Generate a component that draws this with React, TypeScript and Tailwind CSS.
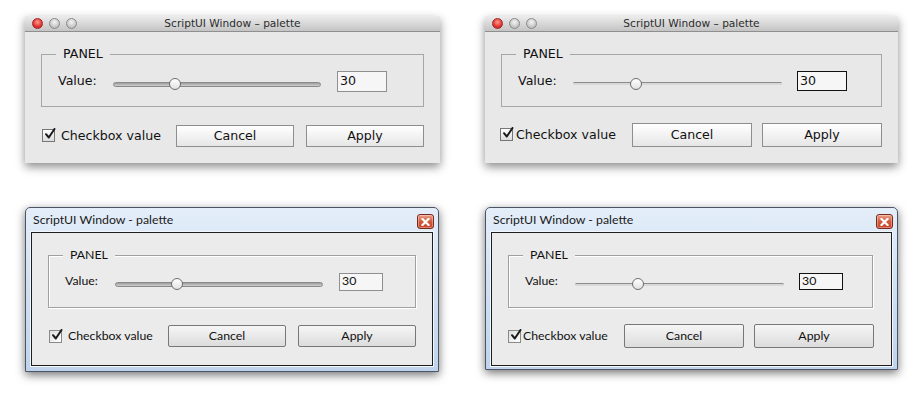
import React from "react";

type Cfg = {
  panelW: number;
  labelW: number;
  sliderW: number;
  editMl: number;
  editW: number;
  editH: number;
  focused: boolean;
  thick: boolean;
  cbMl: number;
  cbW: number;
  cbGap: number;
  btnW: number;
  btnH: number;
  btnGap: number;
  rowMt: number;
};

const macFont = { fontFamily: '"DejaVu Sans", "Noto Sans", sans-serif' };
const winFont = { fontFamily: 'Lato, "Noto Sans", sans-serif' };

const Slider = ({ width, thick, value }: { width: number; thick: boolean; value: number }) => (
  <div className="relative mt-[5px] flex h-[14px] items-center" style={{ width }}>
    {thick ? (
      <div className="h-[5px] w-full rounded-full border border-[#8a8a8a] bg-gradient-to-b from-[#9c9c9c] to-[#d0d0d0]" />
    ) : (
      <div className="h-[3px] w-full rounded-full border-t border-[#8c8c8c] bg-[#d8d8d8]" />
    )}
    <div
      className="absolute top-[1px] h-[12px] w-[12px] -translate-x-1/2 rounded-full border border-[#6e6e6e] bg-gradient-to-b from-white to-[#e2e2e2]"
      style={{ left: `${value}%` }}
    />
  </div>
);

const CheckMark = ({ size }: { size: number }) => (
  <svg width={size} height={size} viewBox="0 0 12 12" className="absolute left-[1px] top-[-2px]">
    <path d="M2 6.2 L4.8 9.5 L10.5 1" fill="none" stroke="#1a1a1a" strokeWidth="2" strokeLinecap="round" strokeLinejoin="round" />
  </svg>
);

const Body = ({ c, mac }: { c: Cfg; mac: boolean }) => {
  const txt = mac ? "text-[12.6px]" : "text-[12.3px]";
  return (
    <>
      <div
        className={`relative h-[53px] border ${mac ? "border-[#a6a6a6]" : "border-[#a0a0a0] shadow-[inset_1px_1px_0_#ffffff,1px_1px_0_#ffffff]"} ml-[16px] mt-[22px]`}
        style={{ width: c.panelW }}
      >
        <span
          className={`absolute left-[14px] top-[-10px] px-[7px] leading-[18px] ${mac ? "bg-[#e8e8e8]" : "bg-[#ebebeb]"} ${txt} text-[#111]`}
        >
          PANEL
        </span>
        <div className="flex items-center pl-[16px] pt-[16px]">
          <span className={`${txt} text-[#111]`} style={{ width: c.labelW }}>
            Value:
          </span>
          <Slider width={c.sliderW} thick={c.thick} value={30} />
          <div
            className={`flex items-center pl-[2px] ${txt} text-[#111] ${
              c.focused ? "border-[1.5px] border-[#111] bg-[#f6f6f6]" : "border border-[#8f8f8f] bg-[#f6f6f6]"
            }`}
            style={{ marginLeft: c.editMl, width: c.editW, height: c.editH }}
          >
            30
          </div>
        </div>
      </div>
      <div className="flex items-center" style={{ marginTop: c.rowMt, marginLeft: c.cbMl }}>
        <div className="flex items-center" style={{ width: c.cbW }}>
          <div
            className={`relative h-[13px] w-[13px] shrink-0 border ${
              mac ? "border-[#777] bg-gradient-to-b from-white to-[#dcdcdc]" : "border-[#8a8a8a] bg-gradient-to-br from-[#dedede] to-white"
            }`}
          >
            <CheckMark size={12} />
          </div>
          <span className={`${txt} text-[#111]`} style={{ marginLeft: c.cbGap }}>
            Checkbox value
          </span>
        </div>
        {["Cancel", "Apply"].map((t, i) => (
          <div
            key={t}
            className={`flex items-center justify-center border ${
              mac
                ? "border-[#8e8e8e] bg-gradient-to-b from-white to-[#e6e6e6]"
                : "rounded-[2px] border-[#777] bg-gradient-to-b from-[#f6f6f6] to-[#dcdcdc]"
            } ${txt} text-[#111]`}
            style={{ width: c.btnW, height: c.btnH, marginLeft: i ? c.btnGap : 0 }}
          >
            {t}
          </div>
        ))}
      </div>
    </>
  );
};

const MacWindow = ({ w, h, c }: { w: number; h: number; c: Cfg }) => (
  <div className="shrink-0 bg-[#e8e8e8] shadow-[0_4px_9px_rgba(0,0,0,0.45)]" style={{ width: w, height: h, ...macFont }}>
    <div className="relative flex h-[16px] items-center justify-center border-b border-[#8f8f8f] bg-gradient-to-b from-[#ececec] to-[#c4c4c4]">
      <div className="absolute left-[7px] top-[2px] flex gap-[6px]">
        <div className="h-[11px] w-[11px] rounded-full border border-[#a0262a] bg-[radial-gradient(circle_at_50%_35%,#ff9a8e,#e0352e_60%,#b81f1f)]" />
        <div className="h-[11px] w-[11px] rounded-full border border-[#8a8a8a] bg-[radial-gradient(circle_at_50%_35%,#f4f4f4,#c2c2c2_70%,#a8a8a8)]" />
        <div className="h-[11px] w-[11px] rounded-full border border-[#8a8a8a] bg-[radial-gradient(circle_at_50%_35%,#f4f4f4,#c2c2c2_70%,#a8a8a8)]" />
      </div>
      <span className="text-[10.6px] leading-none text-[#2c2c2c]">ScriptUI Window – palette</span>
    </div>
    <Body c={c} mac />
  </div>
);

const WinWindow = ({ w, h, clientH, c }: { w: number; h: number; clientH: number; c: Cfg }) => (
  <div
    className="shrink-0 rounded-t-[5px] border border-[#4a5566] bg-gradient-to-b from-[#e4eef9] via-[#cfe0f3] to-[#bfd4ec] px-[5px] shadow-[0_3px_10px_rgba(0,0,0,0.55)]"
    style={{ width: w, height: h, ...winFont }}
  >
    <div className="relative flex h-[24px] items-center">
      <span className="pl-[2px] text-[12.3px] text-[#1a1a1a]">ScriptUI Window - palette</span>
      <div className="absolute right-[-1px] top-[6px] flex h-[15px] w-[17px] items-center justify-center rounded-[3px] border border-[#7a2a1c] bg-gradient-to-b from-[#eaa08a] via-[#d3593c] to-[#c8432a] shadow-[inset_0_0_0_1px_rgba(255,255,255,0.35)]">
        <svg width="9" height="8" viewBox="0 0 9 8">
          <path d="M1.5 1 L7.5 7 M7.5 1 L1.5 7" stroke="#fff" strokeWidth="2.2" strokeLinecap="square" />
        </svg>
      </div>
    </div>
    <div className="border border-[#1e1e1e] bg-[#ebebeb] shadow-[0_0_0_1px_#f2f7fd]" style={{ height: clientH }}>
      <Body c={c} mac={false} />
    </div>
  </div>
);

export default function App() {
  return (
    <div className="h-[393px] w-[923px] overflow-hidden bg-white">
      <div className="flex pl-[25px] pt-[16px]">
        <MacWindow
          w={415}
          h={147}
          c={{ panelW: 383, labelW: 55, sliderW: 208, editMl: 16, editW: 50, editH: 21, focused: false, thick: true, cbMl: 17, cbW: 134, cbGap: 6, btnW: 118, btnH: 22, btnGap: 12, rowMt: 18 }}
        />
        <div className="w-[45px] shrink-0" />
        <MacWindow
          w={413}
          h={147}
          c={{ panelW: 381, labelW: 55, sliderW: 209, editMl: 15, editW: 50, editH: 20, focused: true, thick: false, cbMl: 15, cbW: 132, cbGap: 3, btnW: 120, btnH: 24, btnGap: 10, rowMt: 16 }}
        />
      </div>
      <div className="mt-[44px] flex items-start pl-[25px]">
        <WinWindow
          w={414}
          h={165}
          clientH={134}
          c={{ panelW: 368, labelW: 50, sliderW: 208, editMl: 16, editW: 44, editH: 18, focused: false, thick: true, cbMl: 17, cbW: 119, cbGap: 6, btnW: 118, btnH: 22, btnGap: 12, rowMt: 17 }}
        />
        <div className="w-[46px] shrink-0" />
        <WinWindow
          w={413}
          h={163}
          clientH={134}
          c={{ panelW: 365, labelW: 50, sliderW: 209, editMl: 15, editW: 44, editH: 17, focused: true, thick: false, cbMl: 16, cbW: 116, cbGap: 2, btnW: 120, btnH: 24, btnGap: 10, rowMt: 16 }}
        />
      </div>
    </div>
  );
}
